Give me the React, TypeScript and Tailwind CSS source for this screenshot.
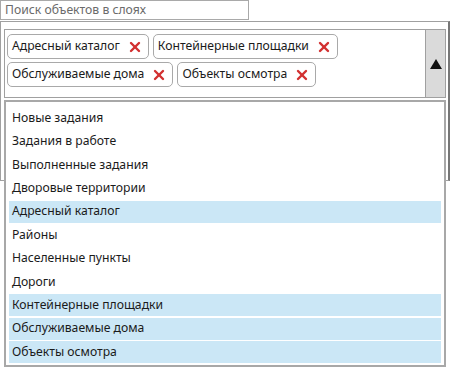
import { X } from "lucide-react";

const TAGS_ROW_1 = ["Адресный каталог", "Контейнерные площадки"];
const TAGS_ROW_2 = ["Обслуживаемые дома", "Объекты осмотра"];

const LAYERS = [
  { name: "Новые задания", selected: false },
  { name: "Задания в работе", selected: false },
  { name: "Выполненные задания", selected: false },
  { name: "Дворовые территории", selected: false },
  { name: "Адресный каталог", selected: true },
  { name: "Районы", selected: false },
  { name: "Населенные пункты", selected: false },
  { name: "Дороги", selected: false },
  { name: "Контейнерные площадки", selected: true },
  { name: "Обслуживаемые дома", selected: true },
  { name: "Объекты осмотра", selected: true },
];

function Tag({ label }: { label: string }) {
  return (
    <div className="flex h-[25px] items-center gap-[7px] rounded-[5px] border border-[#a9a9a9] bg-white pl-[4px] pr-[5px]">
      <span>{label}</span>
      <X size={16} strokeWidth={3.6} className="text-[#d23030]" />
    </div>
  );
}

export default function App() {
  return (
    <div
      className="relative h-[367px] w-[450px] bg-white text-[12.2px] text-[#1b1b1b]"
      style={{ fontFamily: '"Noto Sans", "Open Sans", sans-serif' }}
    >
      {/* Search */}
      <div className="flex h-[20px] w-[249px] items-center border border-[#a9a9a9] px-[4px] text-[#6b6b6b]">
        Поиск объектов в слоях
      </div>

      {/* Selected layers panel */}
      <div className="mt-[1px] h-[160px] w-[450px] border border-r-2 border-[#a0a0a0] border-r-[#777] pl-[3px] pr-[2px] pt-[7px]">
        <div className="flex h-[69px] border border-[#a0a0a0]">
          <div className="flex flex-1 flex-col gap-[3px] pl-[2px] pt-[4px]">
            <div className="flex gap-[4px]">
              {TAGS_ROW_1.map((t) => (
                <Tag key={t} label={t} />
              ))}
            </div>
            <div className="flex gap-[4px]">
              {TAGS_ROW_2.map((t) => (
                <Tag key={t} label={t} />
              ))}
            </div>
          </div>
          <div className="flex w-[20px] items-center justify-center border-l border-[#a0a0a0] bg-[#dadada]">
            <svg width="12" height="10" viewBox="0 0 12 10">
              <path d="M6 0 L12 10 L0 10 Z" fill="#111" />
            </svg>
          </div>
        </div>
      </div>

      {/* Dropdown list */}
      <div className="absolute left-[4px] top-[100px] h-[267px] w-[442px] border-2 border-[#a8a8a8] bg-white px-[3px] pt-[5px]">
        <div className="flex flex-col gap-[1.4px]">
          {LAYERS.map((l) => (
            <div
              key={l.name}
              className={`flex h-[22px] items-center px-[3px] ${l.selected ? "bg-[#cbe7f6]" : ""}`}
            >
              {l.name}
            </div>
          ))}
        </div>
      </div>
    </div>
  );
}
